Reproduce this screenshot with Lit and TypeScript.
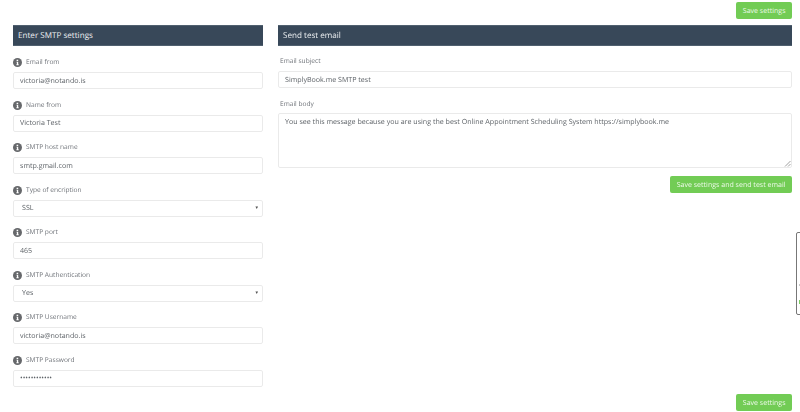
import { LitElement, html, css } from "lit";
import { customElement } from "lit/decorators.js";

const fields: { label: string; value: string; select?: boolean }[] = [
  { label: "Email from", value: "victoria@notando.is" },
  { label: "Name from", value: "Victoria Test" },
  { label: "SMTP host name", value: "smtp.gmail.com" },
  { label: "Type of encription", value: "SSL", select: true },
  { label: "SMTP port", value: "465" },
  { label: "SMTP Authentication", value: "Yes", select: true },
  { label: "SMTP Username", value: "victoria@notando.is" },
  { label: "SMTP Password", value: "••••••••••••" },
];

@customElement("app-root")
export class AppRoot extends LitElement {
  static styles = css`
    :host {
      display: block;
      position: relative;
      width: 800px;
      height: 412px;
      overflow: hidden;
      background: #fff;
      font-family: "Open Sans", sans-serif;
      color: #6b7076;
      text-rendering: geometricPrecision;
    }
    .page {
      display: flex;
      flex-direction: column;
      padding: 2px 8px 0 13px;
      filter: blur(0.3px);
    }
    .actions {
      display: flex;
      justify-content: flex-end;
    }
    .btn {
      height: 17px;
      padding: 1px 6.5px 0;
      box-sizing: border-box;
      display: flex;
      align-items: center;
      background: #72cc55;
      color: #eef9ea;
      border-radius: 2px;
      font-size: 7.05px;
      line-height: 16px;
      white-space: nowrap;
    }
    .columns {
      display: flex;
      gap: 15px;
      margin-top: 6px;
      height: 369px;
    }
    .left {
      width: 250px;
      flex: none;
    }
    .right {
      flex: 1;
      display: flex;
      flex-direction: column;
    }
    .head {
      height: 21px;
      background: #384859;
      border: 1px solid #50606f;
      border-width: 1px 0;
      box-sizing: border-box;
      color: #eef1f3;
      font-size: 8.1px;
      line-height: 20px;
      padding-left: 5px;
    }
    .fields {
      display: flex;
      flex-direction: column;
      margin-top: 9px;
    }
    .field {
      height: 42.5px;
      display: flex;
      flex-direction: column;
      gap: 5px;
    }
    .label {
      display: flex;
      align-items: center;
      gap: 4px;
      height: 12px;
      font-size: 6.6px;
      color: #6f7379;
    }
    .label span {
      padding-top: 1px;
    }
    .info {
      width: 9px;
      height: 9px;
      flex: none;
      margin-top: 3px;
    }
    .input {
      height: 17px;
      flex: none;
      box-sizing: border-box;
      border: 1px solid #eaeaea;
      border-radius: 2px;
      padding: 1px 6px 0;
      font-size: 7.1px;
      line-height: 15px;
      color: #5e6368;
      display: flex;
      align-items: center;
      justify-content: space-between;
      background: #fff;
    }
    .input.select {
      padding: 1px 3px 0 8px;
    }
    .caret {
      font-size: 4.5px;
      color: #555;
    }
    .rlabel {
      height: 12px;
      padding-left: 2px;
      font-size: 6.6px;
      line-height: 12px;
      color: #6f7379;
    }
    .rlabel.first {
      margin-top: 9px;
    }
    .subject {
      margin-top: 4px;
      margin-bottom: 10px;
    }
    .body {
      position: relative;
      height: 55px;
      margin-top: 3px;
      box-sizing: border-box;
      border: 1px solid #eaeaea;
      border-radius: 2px;
      padding: 2px 6px;
      font-size: 7.1px;
      line-height: 12px;
      color: #5e6368;
    }
    .grip {
      position: absolute;
      right: 0;
      bottom: 0;
      width: 7px;
      height: 7px;
    }
    .send {
      align-self: flex-end;
      margin-top: 8px;
    }
    .tab {
      position: absolute;
      left: 796px;
      top: 232px;
      width: 10px;
      height: 83px;
      box-sizing: border-box;
      border: 1px solid #777;
      border-radius: 2px;
      background: #fff;
    }
    .tab i {
      position: absolute;
      left: 2px;
      width: 2px;
      height: 4px;
    }
    .tab .a { top: 51px; background: #c8c8c8; height: 2px; }
    .tab .b { top: 67px; background: #7ccf62; }
  `;

  private info() {
    return html`<svg class="info" viewBox="0 0 9 9" aria-hidden="true">
      <circle cx="4.5" cy="4.5" r="4.5" fill="#66686b"></circle>
      <path d="M3.6 1.8h1.6v1.2H3.6zM3.5 3.7h1.7v2.6h.5v.9H3.4v-.9h.5V4.6h-.4z" fill="#fff"></path>
    </svg>`;
  }

  render() {
    return html`
      <div class="page">
        <div class="actions"><div class="btn">Save settings</div></div>
        <div class="columns">
          <div class="left">
            <div class="head">Enter SMTP settings</div>
            <div class="fields">
              ${fields.map(
                (f) => html`<div class="field">
                  <div class="label">${this.info()}<span>${f.label}</span></div>
                  <div class="input ${f.select ? "select" : ""}">
                    <span>${f.value}</span>${f.select ? html`<span class="caret">▼</span>` : ""}
                  </div>
                </div>`
              )}
            </div>
          </div>
          <div class="right">
            <div class="head">Send test email</div>
            <div class="rlabel first">Email subject</div>
            <div class="input subject">SimplyBook.me SMTP test</div>
            <div class="rlabel">Email body</div>
            <div class="body">
              You see this message because you are using the best Online Appointment Scheduling System https://simplybook.me
              <svg class="grip" viewBox="0 0 7 7" aria-hidden="true">
                <path d="M6.5 1L1 6.5M6.5 4L4 6.5" stroke="#888" stroke-width="0.8" fill="none"></path>
              </svg>
            </div>
            <div class="btn send">Save settings and send test email</div>
          </div>
        </div>
        <div class="actions"><div class="btn">Save settings</div></div>
      </div>
      <div class="tab"><i class="a"></i><i class="b"></i></div>
    `;
  }
}
